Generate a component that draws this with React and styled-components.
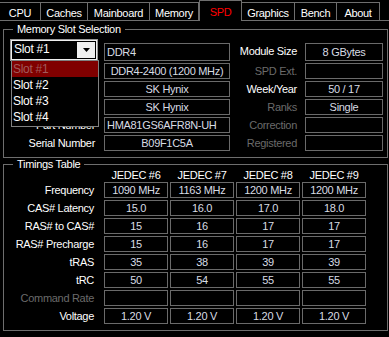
import React from 'react';
import styled, { createGlobalStyle } from 'styled-components';

const GlobalStyle = createGlobalStyle`
  html, body {
    margin: 0;
    padding: 0;
    background: #000;
  }
  body {
    font-family: "Liberation Sans", Arial, sans-serif;
    font-size: 11px;
    letter-spacing: -0.3px;
    color: #fff;
  }
`;

const tabs = [
  { name: 'CPU', w: 41 },
  { name: 'Caches', w: 47 },
  { name: 'Mainboard', w: 62 },
  { name: 'Memory', w: 49 },
  { name: 'SPD', w: 43, active: true },
  { name: 'Graphics', w: 53 },
  { name: 'Bench', w: 42 },
  { name: 'About', w: 43 },
];

// labels on the left are covered by the open slot list, only Part Number peeks out
const slotRows = [
  { label: '', value: 'DDR4-2400 (1200 MHz)', label2: 'SPD Ext.', dim2: true, value2: '' },
  { label: '', value: 'SK Hynix', label2: 'Week/Year', value2: '50 / 17' },
  { label: '', value: 'SK Hynix', label2: 'Ranks', dim2: true, value2: 'Single' },
  { label: 'Part Number', value: 'HMA81GS6AFR8N-UH', label2: 'Correction', dim2: true, value2: '', left: true },
  { label: 'Serial Number', value: 'B09F1C5A', label2: 'Registered', dim2: true, value2: '' },
];

const timings = [
  { label: 'Frequency', values: ['1090 MHz', '1163 MHz', '1200 MHz', '1200 MHz'] },
  { label: 'CAS# Latency', values: ['15.0', '16.0', '17.0', '18.0'] },
  { label: 'RAS# to CAS#', values: ['15', '16', '17', '17'] },
  { label: 'RAS# Precharge', values: ['15', '16', '17', '17'] },
  { label: 'tRAS', values: ['35', '38', '39', '39'] },
  { label: 'tRC', values: ['50', '54', '55', '55'] },
  { label: 'Command Rate', dim: true, values: ['', '', '', ''] },
  { label: 'Voltage', values: ['1.20 V', '1.20 V', '1.20 V', '1.20 V'] },
];

const slots = ['Slot #1', 'Slot #2', 'Slot #3', 'Slot #4'];

const App = () => {
  return (
    <Window>
      <GlobalStyle />
      <TabBar>
        {tabs.map((t) => (
          <Tab key={t.name} $w={t.w} $active={t.active}>
            {t.name}
          </Tab>
        ))}
      </TabBar>

      <Page>
        <Group>
          <Legend>Memory Slot Selection</Legend>
          <SlotGrid>
            <Combo>
              <ComboText>Slot #1</ComboText>
              <ArrowButton>
                <svg width="7" height="4" viewBox="0 0 7 4">
                  <path d="M0 0h7L3.5 4z" fill="#000" />
                </svg>
              </ArrowButton>
              <DropList>
                {slots.map((s, idx) => (
                  <DropItem key={s} $selected={idx === 0}>
                    {s}
                  </DropItem>
                ))}
              </DropList>
            </Combo>
            <Field $first $left>DDR4</Field>
            <Label $first>Module Size</Label>
            <Field $first>8 GBytes</Field>

            {slotRows.map((r, i) => (
              <React.Fragment key={i}>
                <Label $pad={3}>{r.label}</Label>
                <Field $left={r.left}>{r.value}</Field>
                <Label $dim={r.dim2}>{r.label2}</Label>
                <Field>{r.value2}</Field>
              </React.Fragment>
            ))}
          </SlotGrid>
        </Group>

        <Group>
          <Legend>Timings Table</Legend>
          <TimingGrid>
            <span />
            {['JEDEC #6', 'JEDEC #7', 'JEDEC #8', 'JEDEC #9'].map((h) => (
              <Header key={h}>{h}</Header>
            ))}
            {timings.map((row) => (
              <React.Fragment key={row.label}>
                <Label $pad={8} $dim={row.dim}>
                  {row.label}
                </Label>
                {row.values.map((v, i) => (
                  <Field key={i}>{v}</Field>
                ))}
              </React.Fragment>
            ))}
          </TimingGrid>
        </Group>
      </Page>
    </Window>
  );
};

const Window = styled.div`
  width: 389px;
  height: 337px;
  background: #000;
  overflow: hidden;
`;

const TabBar = styled.div`
  display: flex;
  align-items: flex-end;
  height: 20px;
  position: relative;
  z-index: 1;
`;

const Tab = styled.div`
  width: ${(p) => p.$w}px;
  height: ${(p) => (p.$active ? 21 : 18)}px;
  margin-bottom: ${(p) => (p.$active ? -1 : 0)}px;
  box-sizing: border-box;
  display: flex;
  align-items: center;
  justify-content: center;
  padding-top: ${(p) => (p.$active ? 1 : 3)}px;
  background: #000;
  color: ${(p) => (p.$active ? '#ff0000' : '#fff')};
  border: 1px solid #6e6e6e;
  border-bottom: none;
  border-left: ${(p) => (p.$active ? '1px solid #6e6e6e' : 'none')};
`;

const Page = styled.div`
  border-top: 1px solid #6e6e6e;
  padding: 2px 1px 0 3px;
`;

const Group = styled.fieldset`
  margin: 0;
  padding: 4px 0 6px 6px;
  border: 1px solid #6e6e6e;
  min-width: 0;

  & + & {
    padding-top: 0;
  }
`;

const Legend = styled.legend`
  margin-left: 3px;
  padding: 0 4px;
  font-size: 11px;
  line-height: 12px;
  color: #fff;
`;

const SlotGrid = styled.div`
  display: grid;
  grid-template-columns: 88px 126px 63px 78px;
  grid-template-rows: 22px repeat(5, 16px);
  column-gap: 6px;
  row-gap: 2px;
`;

const Label = styled.div`
  display: flex;
  align-items: center;
  justify-content: flex-end;
  padding-right: ${(p) => p.$pad ?? 2}px;
  padding-bottom: 1px;
  color: ${(p) => (p.$dim ? '#6b6b6b' : '#fff')};
  white-space: nowrap;
  align-self: ${(p) => (p.$first ? 'end' : 'stretch')};
  height: ${(p) => (p.$first ? '18px' : 'auto')};
`;

const Field = styled.div`
  box-sizing: border-box;
  border: 1px solid #6a6a6a;
  display: flex;
  align-items: center;
  justify-content: ${(p) => (p.$left ? 'flex-start' : 'center')};
  padding: 0 2px 1px;
  color: #d8dce4;
  white-space: nowrap;
  overflow: hidden;
  align-self: ${(p) => (p.$first ? 'end' : 'stretch')};
  height: ${(p) => (p.$first ? '18px' : 'auto')};
`;

const Combo = styled.div`
  position: relative;
  z-index: 2;
  box-sizing: border-box;
  border: 1px solid #9a9a9a;
  box-shadow: inset 0 0 0 1px #f0f0f0;
  background: #000;
  display: flex;
  align-items: stretch;
  padding: 2px;
`;

const ComboText = styled.div`
  flex: 1;
  display: flex;
  align-items: center;
  padding-left: 1px;
  padding-bottom: 2px;
  font-size: 12px;
  color: #fff;
`;

const ArrowButton = styled.div`
  width: 18px;
  background: #f0f0f0;
  display: flex;
  align-items: center;
  justify-content: center;
`;

const DropList = styled.div`
  position: absolute;
  top: 100%;
  left: 0;
  width: 88px;
  box-sizing: border-box;
  border: 1px solid #808080;
  background: #000;
  padding-bottom: 1px;
`;

const DropItem = styled.div`
  height: 16px;
  display: flex;
  align-items: center;
  padding-left: 1px;
  font-size: 12px;
  background: ${(p) => (p.$selected ? '#800000' : '#000')};
  color: ${(p) => (p.$selected ? '#a15b5b' : '#fff')};
`;

const TimingGrid = styled.div`
  display: grid;
  grid-template-columns: 92px repeat(4, 64px);
  grid-template-rows: 10px repeat(8, 16px);
  column-gap: 2px;
  row-gap: 2px;
`;

const Header = styled.div`
  display: flex;
  align-items: center;
  justify-content: center;
  color: #fff;
  white-space: nowrap;
`;

export default App;
